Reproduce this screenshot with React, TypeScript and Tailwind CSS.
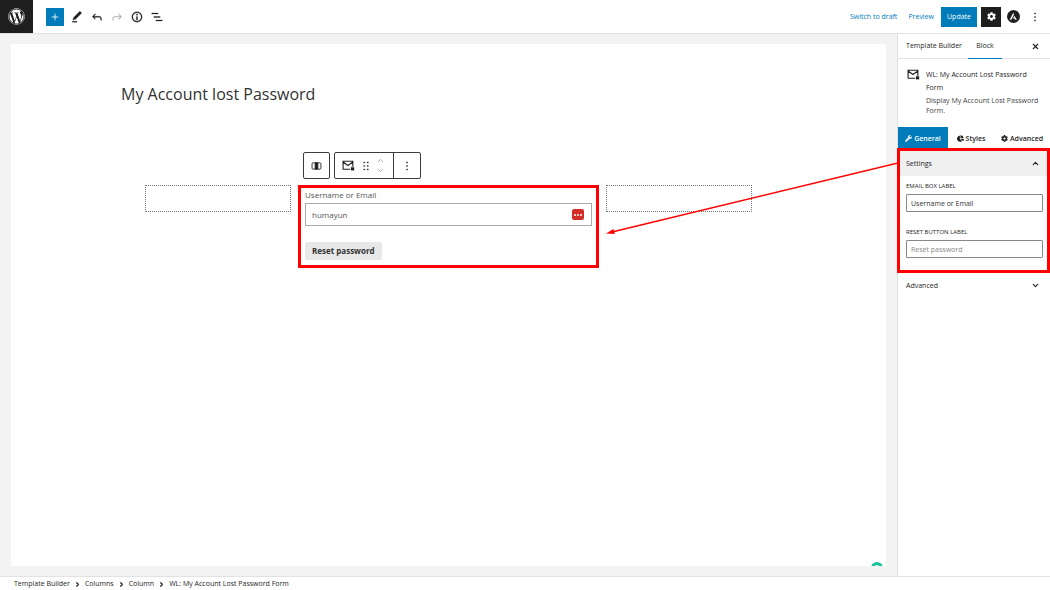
import type { ReactNode } from 'react';
import { FaChartPie, FaCog, FaWordpress, FaWrench } from 'react-icons/fa';
import { ChevronDown, ChevronRight, ChevronUp, Plus, X } from 'lucide-react';

type IconProps = { d: string; className?: string };

const paths = {
  edit: 'M20.1 5.1L16.9 2 6.2 12.7l-1.3 4.4 4.5-1.3L20.1 5.1zM4 20.8h8v-1.5H4v1.5z',
  undo: 'M18.3 11.7c-.6-.6-1.4-.9-2.3-.9H6.7l2.9-3.3-1.1-1-4.5 5L8.5 16l1-1-2.7-2.7H16c.5 0 .9.2 1.3.5 1 1 1 3.4 1 4.5v.3h1.5v-.2c0-1.5 0-4.3-1.5-5.7z',
  redo: 'M15.6 6.5l-1.1 1 2.9 3.3H8c-.9 0-1.7.3-2.3.9-1.4 1.5-1.4 4.2-1.4 5.6v.2h1.5v-.3c0-1.1 0-3.5 1-4.5.3-.3.7-.5 1.3-.5h9.2L14.5 15l1.1 1.1 4.6-4.6-4.6-5z',
  info: 'M12 3.2c-4.8 0-8.8 3.9-8.8 8.8 0 4.8 3.9 8.8 8.8 8.8 4.8 0 8.8-3.9 8.8-8.8 0-4.8-4-8.8-8.8-8.8zm0 16c-4 0-7.2-3.3-7.2-7.2C4.8 8 8 4.8 12 4.8s7.2 3.3 7.2 7.2c0 4-3.2 7.2-7.2 7.2zM11 17h2v-6h-2v6zm0-8h2V7h-2v2z',
  list: 'M13.8 5.2H3v1.5h10.8V5.2zm-3.6 12v1.5H21v-1.5H10.2zm7.2-6H6.6v1.5h10.8v-1.5z',
  more: 'M13 19h-2v-2h2v2zm0-6h-2v-2h2v2zm0-6h-2V5h2v2z',
  drag: 'M8 7h2V5H8v2zm0 6h2v-2H8v2zm0 6h2v-2H8v2zm6-14v2h2V5h-2zm0 8h2v-2h-2v2zm0 6h2v-2h-2v2z',
};

function Icon({ d, className = 'size-4' }: IconProps) {
  return (
    <svg viewBox="0 0 24 24" className={className} fill="currentColor" stroke="currentColor" strokeWidth="0.5" aria-hidden="true">
      <path d={d} />
    </svg>
  );
}

function MailLockIcon({ className }: { className: string }) {
  return (
    <svg viewBox="0 0 24 20" className={className} fill="none" stroke="currentColor" strokeWidth="2" aria-hidden="true">
      <path d="M15 17H2V2h18v9M2 3.500l9 6.500 9-6.500" />
      <path d="M18 14v-1.200a1.500 1.500 0 0 1 3 0V14" strokeWidth="1.200" />
      <path d="M16.500 13.500h6V19h-6z" fill="currentColor" stroke="none" />
    </svg>
  );
}

function ColumnIcon() {
  return (
    <svg viewBox="0 0 24 18" className="h-2 w-[11px]" fill="none" stroke="currentColor" strokeWidth="2" aria-hidden="true">
      <rect x="2" y="2" width="20" height="14" rx="2" />
      <path d="M9 2h6v14H9z" fill="currentColor" />
    </svg>
  );
}

function AstraIcon() {
  return (
    <svg viewBox="0 0 24 24" className="size-[13px]" aria-hidden="true">
      <circle cx="12" cy="12" r="12" fill="#1e1e1e" />
      <path d="M11.500 5L5 18h3l4.800-9.600zM13.500 10.500L11 15.500h3l1 2.500h3.200z" fill="#fff" />
    </svg>
  );
}

function IconButton({ label, className = '', children }: { label: string; className?: string; children: ReactNode }) {
  return (
    <button type="button" aria-label={label} className={`flex items-center justify-center ${className}`}>
      {children}
    </button>
  );
}

function Header() {
  return (
    <header className="flex h-[34px] shrink-0 items-center justify-between border-b border-[#e2e2e2] bg-white">
      <div className="flex items-center">
        <a href="#dashboard" aria-label="WordPress" className="flex h-[33px] w-[33px] items-center justify-center bg-[#1e1e1e] text-white">
          <FaWordpress size={17} />
        </a>
        <IconButton label="Add block" className="ml-[13px] size-[18px] bg-[#007cba] text-white">
          <Plus size={10} />
        </IconButton>
        <div className="ml-[3px] flex items-center">
          <IconButton label="Edit" className="size-5"><Icon d={paths.edit} className="size-[14px]" /></IconButton>
          <IconButton label="Undo" className="size-5"><Icon d={paths.undo} className="size-[14px]" /></IconButton>
          <IconButton label="Redo" className="size-5 text-[#b5b5b5]"><Icon d={paths.redo} className="size-[14px]" /></IconButton>
          <IconButton label="Details" className="size-5"><Icon d={paths.info} className="size-[14px]" /></IconButton>
          <IconButton label="List view" className="size-5"><Icon d={paths.list} className="size-[14px]" /></IconButton>
        </div>
      </div>
      <div className="flex items-center pr-2">
        <button type="button" className="text-[#007cba]">Switch to draft</button>
        <button type="button" className="ml-[11px] text-[#007cba]">Preview</button>
        <button type="button" className="ml-[7px] h-5 w-9 bg-[#007cba] text-white">Update</button>
        <IconButton label="Settings" className="ml-1 size-5 bg-[#1e1e1e] text-white"><FaCog size={9} /></IconButton>
        <IconButton label="Astra settings" className="ml-[6px]"><AstraIcon /></IconButton>
        <IconButton label="Options" className="ml-2 w-[14px]"><Icon d={paths.more} className="size-[14px]" /></IconButton>
      </div>
    </header>
  );
}

function BlockToolbar() {
  return (
    <div className="mx-auto flex h-[27px] w-[291px] gap-1">
      <IconButton label="Select parent column" className="w-[27px] rounded-[2px] border border-[#3c3c3c]"><ColumnIcon /></IconButton>
      <div className="flex w-[87px] rounded-[2px] border border-[#3c3c3c]">
        <div className="flex flex-1 items-center justify-between border-r border-[#3c3c3c] pr-2 pl-[7px]">
          <IconButton label="Form block"><MailLockIcon className="h-[11px] w-[13px]" /></IconButton>
          <IconButton label="Drag"><Icon d={paths.drag} className="size-[14px]" /></IconButton>
          <div className="flex flex-col gap-px text-[#8f8f8f]">
            <IconButton label="Move up"><ChevronUp size={9} /></IconButton>
            <IconButton label="Move down"><ChevronDown size={9} /></IconButton>
          </div>
        </div>
        <IconButton label="More options" className="w-[26px]"><Icon d={paths.more} className="size-[14px]" /></IconButton>
      </div>
    </div>
  );
}

function Canvas() {
  return (
    <main className="flex min-w-0 flex-1 bg-[#f3f3f3] px-[11px] py-[10px]">
      <div className="relative flex-1 overflow-hidden bg-white pt-[39px]">
        <h1 className="mx-auto w-[655px] text-[16px] leading-[22px] text-[#333]">My Account lost Password</h1>
        <div className="mt-[47px]"><BlockToolbar /></div>
        <div className="mx-auto mt-[6px] grid w-[607px] grid-cols-[146fr_301fr_146fr] items-start gap-[7px]">
          <div className="h-[27px] border border-dotted border-[#777]" />
          <form className="border-[3px] border-[#ff0000] px-1 pb-[5px]">
            <label htmlFor="user-login" className="block text-[8px] leading-[14px] text-[#555]">Username or Email</label>
            <div className="relative mt-px">
              <input id="user-login" defaultValue="humayun" className="block h-[23px] w-full border border-[#aaa] px-[6px] text-[8px] text-[#555]" />
              <span className="absolute top-[6px] right-2 flex h-[11px] w-3 items-center justify-center gap-px rounded-[2px] bg-[#d32d27]">
                <i className="size-[2px] rounded-full bg-white" />
                <i className="size-[2px] rounded-full bg-white" />
                <i className="size-[2px] rounded-full bg-white" />
              </span>
            </div>
            <button type="button" className="mt-4 block h-[18px] rounded-[2px] bg-[#e8e8e8] px-[7px] text-[8px] font-bold text-[#333]">Reset password</button>
          </form>
          <div className="h-[27px] border border-dotted border-[#777]" />
        </div>
        <span className="absolute right-[3px] -bottom-2 size-3 rounded-full border-[3px] border-[#15c39a] bg-[#cfe8f5]" />
      </div>
    </main>
  );
}

function Field({ id, label, value, placeholder }: { id: string; label: string; value?: string; placeholder?: string }) {
  return (
    <div>
      <label htmlFor={id} className="block text-[6px] leading-2 font-medium uppercase">{label}</label>
      <input
        id={id}
        defaultValue={value}
        placeholder={placeholder}
        className="mt-1 block h-[18px] w-full rounded-[1px] border border-[#888] px-1 text-[7px] text-[#333] placeholder:text-[#888]"
      />
    </div>
  );
}

function Sidebar() {
  return (
    <aside className="w-[153px] shrink-0 border-l border-[#e2e2e2] bg-white">
      <div className="flex h-[25px] items-stretch border-b border-[#e2e2e2] pl-2 font-medium">
        <button type="button" className="w-[56px] whitespace-nowrap">Template Builder</button>
        <button type="button" className="-mb-px ml-[6px] w-[34px] border-b border-[#007cba]">Block</button>
        <IconButton label="Close settings" className="mr-[10px] ml-auto"><X size={9} strokeWidth={3} /></IconButton>
      </div>
      <div className="flex h-[68px] gap-[6px] pt-[9px] pl-[9px]">
        <MailLockIcon className="mt-px h-[11px] w-[13px] shrink-0" />
        <div>
          <h2 className="leading-[13px] font-medium">WL: My Account Lost Password<br />Form</h2>
          <p className="mt-[2px] leading-[10px] text-[#444]">Display My Account Lost Password Form.</p>
        </div>
      </div>
      <div className="flex h-[21px] font-semibold">
        <button type="button" className="flex w-[50px] items-center justify-center gap-[2px] bg-[#007cba] pt-[2px] text-white"><FaWrench size={7} />General</button>
        <button type="button" className="flex w-[46px] items-center justify-center gap-[2px] pt-[2px]"><FaChartPie size={7} />Styles</button>
        <button type="button" className="flex flex-1 items-center justify-center gap-[2px] pt-[2px]"><FaCog size={7} />Advanced</button>
      </div>
      <section className="-ml-px border-[3px] border-[#ff0000] pb-3">
        <button type="button" className="flex h-[25px] w-full items-center justify-between bg-[#f0f0f0] pr-[7px] pl-[6px] font-medium">
          Settings<ChevronUp size={9} strokeWidth={3} />
        </button>
        <div className="flex flex-col gap-4 pt-[6px] pr-1 pl-[6px]">
          <Field id="email-label" label="Email box label" value="Username or Email" />
          <Field id="reset-label" label="Reset button label" placeholder="Reset password" />
        </div>
      </section>
      <button type="button" className="flex h-[25px] w-full items-center justify-between pr-[10px] pl-2 font-medium">
        Advanced<ChevronDown size={9} strokeWidth={3} />
      </button>
    </aside>
  );
}

function Breadcrumbs() {
  const items = ['Template Builder', 'Columns', 'Column', 'WL: My Account Lost Password Form'];
  return (
    <footer className="flex h-[14px] shrink-0 items-center gap-1 border-t border-[#e2e2e2] bg-white pt-px pl-[14px]">
      {items.map((item, i) => (
        <span key={item} className="flex items-center gap-1">
          {i > 0 && <ChevronRight size={7} strokeWidth={4} />}
          <a href="#block">{item}</a>
        </span>
      ))}
    </footer>
  );
}

export default function App() {
  return (
    <div className="relative flex h-screen flex-col overflow-hidden bg-white font-['Open_Sans',sans-serif] text-[7px] leading-[10px] text-[#1e1e1e]">
      <Header />
      <div className="flex min-h-0 flex-1">
        <Canvas />
        <Sidebar />
      </div>
      <Breadcrumbs />
      <svg viewBox="0 0 292 76" className="pointer-events-none absolute top-[160px] right-[152px] h-[76px] w-[292px]" aria-hidden="true">
        <path d="M292 3L6 72" stroke="#ff0000" strokeWidth="1.500" />
        <path d="M0 73.500l7.500-4.500 1.300 5z" fill="#ff0000" />
      </svg>
    </div>
  );
}
